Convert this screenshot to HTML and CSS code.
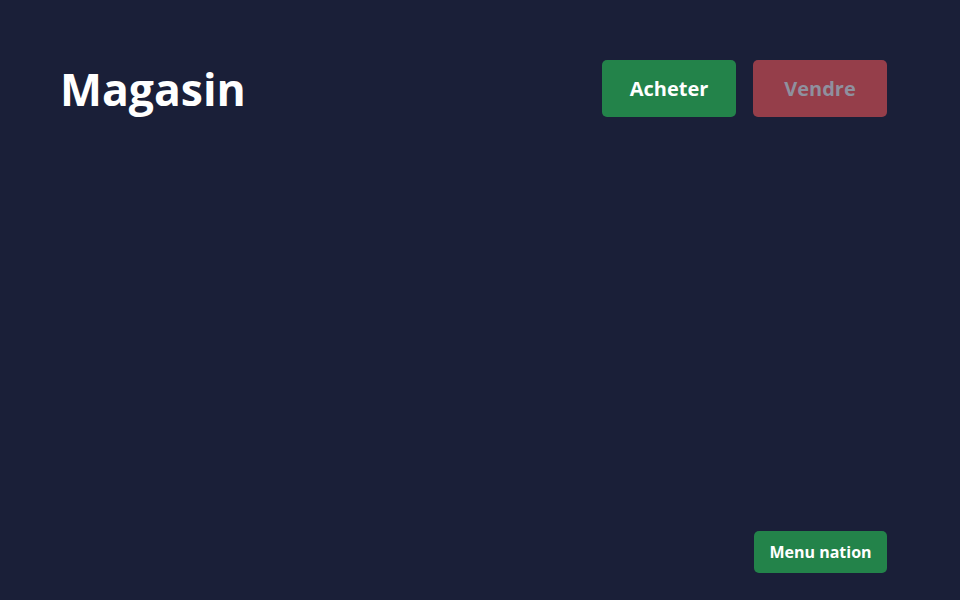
FILE: index.html
```html
<!DOCTYPE html>
<html lang="fr">
<head>
<meta charset="utf-8">
<title>Magasin</title>
<link rel="stylesheet" href="styles.css">
</head>
<body>
<div class="page">
  <header class="header">
    <h1 class="title">Magasin</h1>
    <div class="actions">
      <button class="btn btn-buy">Acheter</button>
      <button class="btn btn-sell">Vendre</button>
    </div>
  </header>
  <footer class="footer">
    <button class="btn-small">Menu nation</button>
  </footer>
</div>
</body>
</html>
```
FILE: styles.css
```css
* { box-sizing: border-box; }
html, body {
  margin: 0;
  height: 100%;
  background: #1a1f38;
  font-family: "Open Sans", "Noto Sans", sans-serif;
}
.page {
  height: 100vh;
  display: flex;
  flex-direction: column;
  justify-content: space-between;
  padding: 60px 73px 27px 60px;
}
.header {
  display: flex;
  align-items: center;
  justify-content: space-between;
}
.title {
  margin: 0;
  color: #ffffff;
  font-size: 44.5px;
  font-weight: 700;
  line-height: 56px;
}
.actions {
  display: flex;
  gap: 17px;
}
.btn {
  width: 134px;
  height: 57px;
  border: none;
  border-radius: 5px;
  font-family: inherit;
  font-size: 20px;
  font-weight: 700;
  padding: 0;
}
.btn-buy {
  background: #23834a;
  color: #ffffff;
}
.btn-sell {
  background: #953e4a;
  color: #8f909e;
}
.footer {
  display: flex;
  justify-content: flex-end;
}
.btn-small {
  width: 133px;
  height: 42px;
  border: none;
  border-radius: 5px;
  background: #23834a;
  color: #ffffff;
  font-family: inherit;
  font-size: 16px;
  font-weight: 700;
  padding: 0;
}
```
